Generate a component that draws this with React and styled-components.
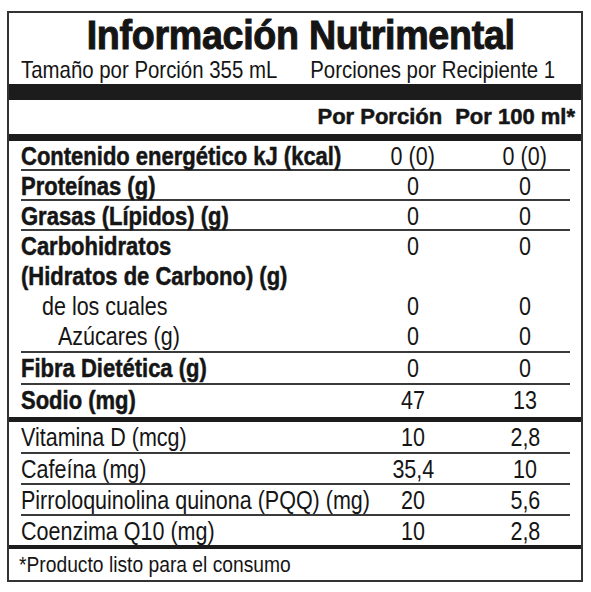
import React from "react";
import styled, { createGlobalStyle } from "styled-components";

const GlobalStyle = createGlobalStyle`
  html, body {
    margin: 0;
    padding: 0;
    background: #ffffff;
  }
  body {
    font-family: "Liberation Sans", Arial, sans-serif;
    color: #151515;
  }
`;

// Liberation Sans has no narrow cut here, so text is squeezed to mimic Helvetica Condensed
const Squeeze = styled.span`
  display: inline-block;
  white-space: nowrap;
  transform: scaleX(${(p) => p.$sx || 0.86});
  transform-origin: ${(p) => p.$origin || "left"} center;
`;

const Page = styled.div`
  padding: 11px 8px 10px 7px;
`;

const Label = styled.section`
  width: 576px;
  height: 571px;
  box-sizing: border-box;
  border: 2px solid #333;
  display: flex;
  flex-direction: column;
`;

const Title = styled.h1`
  margin: 0;
  height: 42px;
  text-align: center;
  padding-left: 12px;
  font-size: 40px;
  line-height: 44px;
  font-weight: 700;
  letter-spacing: -0.3px;
  -webkit-text-stroke: 1px #151515;
`;

const ServingLine = styled.div`
  display: flex;
  padding: 0 26px 0 12px;
  height: 29px;
  font-size: 24px;
  line-height: 30px;
`;

const Side = styled.div`
  flex: 1;
  min-width: 0;
  display: flex;
  justify-content: ${(p) => (p.$end ? "flex-end" : "flex-start")};
`;

const Bar = styled.div`
  height: ${(p) => p.$h}px;
  background: #1c1c1c;
`;

const ColumnHead = styled.div`
  display: flex;
  justify-content: flex-end;
  align-items: center;
  gap: 13px;
  height: 34px;
  padding-right: 6px;
  font-size: 22px;
  font-weight: 700;
  -webkit-text-stroke: 0.5px #151515;
`;

const Rows = styled.div`
  display: flex;
  flex-direction: column;
  margin: 0 11px 0 12px;
`;

const Row = styled.div`
  display: grid;
  grid-template-columns: minmax(0, 1fr) 80px 90px;
  column-gap: 27px;
  height: ${(p) => p.$h}px;
  box-sizing: border-box;
  border-bottom: ${(p) => (p.$last ? "none" : "2px solid #3a3a3a")};
  font-size: 25px;
  line-height: 28px;
  padding-top: 1px;
`;

const Name = styled.div`
  font-weight: ${(p) => (p.$bold ? 700 : 400)};
  padding-left: ${(p) => p.$indent || 0}px;
  white-space: nowrap;
  ${(p) => (p.$bold ? "-webkit-text-stroke: 0.5px #151515;" : "")}
`;

const Value = styled.div`
  text-align: center;
  white-space: nowrap;
`;

const Stack = styled.div`
  display: flex;
  flex-direction: column;
  border-bottom: 2px solid #3a3a3a;
`;

const Footer = styled.div`
  flex: 1;
  padding-left: 10px;
  font-size: 22px;
  line-height: 31px;
`;

const nutrients = [
  { name: "Contenido energético kJ (kcal)", a: "0 (0)", b: "0 (0)", h: 30 },
  { name: "Proteínas (g)", a: "0", b: "0", h: 30 },
  { name: "Grasas (Lípidos) (g)", a: "0", b: "0", h: 30 },
];

const carbs = [
  { name: "Carbohidratos", a: "0", b: "0", bold: true },
  { name: "(Hidratos de Carbono) (g)", a: "", b: "", bold: true },
  { name: "de los cuales", a: "0", b: "0", indent: 21 },
  { name: "Azúcares (g)", a: "0", b: "0", indent: 37 },
];

const extras = [
  { name: "Vitamina D (mcg)", a: "10", b: "2,8", h: 32 },
  { name: "Cafeína (mg)", a: "35,4", b: "10", h: 31 },
  { name: "Pirroloquinolina quinona (PQQ) (mg)", a: "20", b: "5,6", h: 31 },
  { name: "Coenzima Q10 (mg)", a: "10", b: "2,8", h: 29, last: true },
];

function Line({ name, a, b, bold, indent, h, last }) {
  return (
    <Row $h={h} $last={last}>
      <Name $bold={bold} $indent={indent}>
        <Squeeze $sx={bold ? 0.88 : 0.86}>{name}</Squeeze>
      </Name>
      <Value>
        <Squeeze $sx={0.86} $origin="center">{a}</Squeeze>
      </Value>
      <Value>
        <Squeeze $sx={0.86} $origin="center">{b}</Squeeze>
      </Value>
    </Row>
  );
}

export default function App() {
  return (
    <>
      <GlobalStyle />
      <Page>
        <Label>
          <Title>
            <Squeeze $sx={0.94} $origin="center">Información Nutrimental</Squeeze>
          </Title>
          <ServingLine>
            <Side>
              <Squeeze $sx={0.85}>Tamaño por Porción 355 mL</Squeeze>
            </Side>
            <Side $end>
              <Squeeze $sx={0.85} $origin="right">Porciones por Recipiente 1</Squeeze>
            </Side>
          </ServingLine>
          <Bar $h={16} />
          <ColumnHead>
            <span>Por Porción</span>
            <span>Por 100 ml*</span>
          </ColumnHead>
          <Bar $h={7} />
          <Rows>
            {nutrients.map((n) => (
              <Line key={n.name} {...n} bold />
            ))}
            <Stack>
              {carbs.map((n) => (
                <Line key={n.name} {...n} h={30} last />
              ))}
            </Stack>
            <Line name="Fibra Dietética (g)" a="0" b="0" bold h={32} />
            <Line name="Sodio (mg)" a="47" b="13" bold h={32} last />
          </Rows>
          <Bar $h={5} />
          <Rows>
            {extras.map((n) => (
              <Line key={n.name} {...n} />
            ))}
          </Rows>
          <Bar $h={4} />
          <Footer>
            <Squeeze $sx={0.875}>*Producto listo para el consumo</Squeeze>
          </Footer>
        </Label>
      </Page>
    </>
  );
}
